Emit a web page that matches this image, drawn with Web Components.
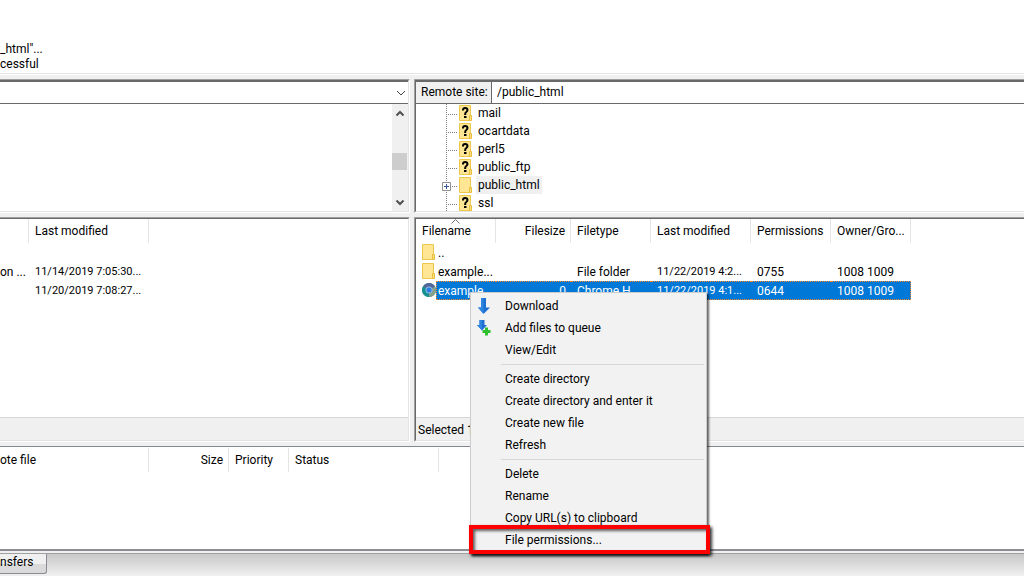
<!DOCTYPE html>
<html lang="en">
<head>
<meta charset="utf-8">
<title>FTP client</title>
<style>
  html, body {
    margin: 0;
    height: 100%;
  }

  body {
    overflow: hidden;
    font: 12px/18px Roboto, "Open Sans", sans-serif;
    color: #000;
    --face: #f0f0f0;
    --shadow: #a0a0a0;
    --dark: #696969;
    --light: #e3e3e3;
    --select: #0078d7;
  }
</style>
</head>
<body>
<ftp-window>
  <message-log slot="log">
    <div>_html"...</div>
    <div>cessful</div>
  </message-log>

  <sunken-pane slot="local-tree">
    <local-site></local-site>
  </sunken-pane>
  <sunken-pane slot="remote-tree">
    <remote-site path="/public_html"></remote-site>
    <remote-tree></remote-tree>
  </sunken-pane>

  <sunken-pane slot="local-files">
    <file-list id="local"></file-list>
    <status-line></status-line>
  </sunken-pane>
  <sunken-pane slot="remote-files">
    <file-list id="remote"></file-list>
    <status-line>Selected 1 file.</status-line>
  </sunken-pane>

  <transfer-queue slot="queue"></transfer-queue>
  <queue-tabs slot="tabs">nsfers</queue-tabs>

  <context-menu slot="menu">
    <menu-item icon="download">Download</menu-item>
    <menu-item icon="queue">Add files to queue</menu-item>
    <menu-item>View/Edit</menu-item>
    <menu-separator></menu-separator>
    <menu-item>Create directory</menu-item>
    <menu-item>Create directory and enter it</menu-item>
    <menu-item>Create new file</menu-item>
    <menu-item>Refresh</menu-item>
    <menu-separator></menu-separator>
    <menu-item>Delete</menu-item>
    <menu-item>Rename</menu-item>
    <menu-item>Copy URL(s) to clipboard</menu-item>
    <menu-item marked>File permissions...</menu-item>
  </context-menu>
</ftp-window>

<script>
const ICONS = {
  folder: `
    <svg width="14" height="16" viewBox="0 0 14 16" aria-hidden="true">
      <path d="M.5.5h11v15H.5z" fill="#ffe694" stroke="#edc64c"/>
      <path d="M10.500 15.500v-5h2v5z" fill="#ffe285" stroke="#e8bd3c"/>
    </svg>`,
  unknown: `
    <svg width="14" height="16" viewBox="0 0 14 16" aria-hidden="true">
      <path d="M.5.5h11v15H.5z" fill="#ffe694" stroke="#edc64c"/>
      <path d="M10.500 15.500v-5h2v5z" fill="#ffe285" stroke="#e8bd3c"/>
      <path d="M4 5.500V5q0-2 2.200-2T8.500 5q0 1.200-1.200 2T6.200 9v1" fill="none" stroke="#000" stroke-width="2"/>
      <path d="M5 11h2.500v2H5z"/>
    </svg>`,
  chrome: `
    <svg width="14" height="14" viewBox="0 0 14 14" aria-hidden="true">
      <circle cx="7" cy="7" r="7" fill="#3f7f8c"/>
      <path d="M7 7L1 3.500A7 7 0 0 1 13 3.500z" fill="#53669a"/>
      <path d="M7 7l6-3.500A7 7 0 0 1 7 14z" fill="#84a08c"/>
      <path d="M7 7v7A7 7 0 0 1 1 3.500z" fill="#149190"/>
      <circle cx="7" cy="7" r="3.500" fill="#8fb8e6"/>
      <circle cx="7" cy="7" r="2.500" fill="#2a7de1"/>
    </svg>`,
  download: `
    <svg width="16" height="16" viewBox="0 0 16 16" aria-hidden="true">
      <path d="M6 0h5v9.500h4L9 15.500H8l-5-6h3z" fill="#1f6fd0"/>
      <path d="M6 0h2.500v15.500L3 9.500h3z" fill="#2f86e0"/>
    </svg>`,
  queue: `
    <svg width="16" height="16" viewBox="0 0 16 16" aria-hidden="true">
      <path d="M4.500 0h5v5H12l-5 5.500L2 5h2.500z" fill="#1f6fd0"/>
      <path d="M4.500 0H7v10.500L2 5h2.500z" fill="#2f86e0"/>
      <path d="M10 7.500h3v2.500h2.500v3H13v2.500h-3V13H7.500v-3H10z" fill="#2fc02f"/>
    </svg>`
};

class FtpWindow extends HTMLElement {
  constructor() {
    super();
    this.attachShadow({ mode: 'open' });
    this.shadowRoot.innerHTML = `
      <style>
        :host {
          position: relative;
          display: grid;
          grid-template-rows: auto auto 1fr auto;
          row-gap: 4px;
          height: 100%;
          overflow: hidden;
          background: var(--face);
        }

        .split {
          display: grid;
          grid-template-columns: 41fr 61fr;
          gap: 4px;
          min-height: 0;
        }

        .trees {
          height: 134px;
        }

        .bottom {
          display: flex;
          flex-direction: column;
        }
      </style>

      <slot name="log"></slot>
      <div class="split trees">
        <slot name="local-tree"></slot>
        <slot name="remote-tree"></slot>
      </div>
      <div class="split">
        <slot name="local-files"></slot>
        <slot name="remote-files"></slot>
      </div>
      <div class="bottom">
        <slot name="queue"></slot>
        <slot name="tabs"></slot>
      </div>
      <slot name="menu"></slot>
    `;
  }
}

class MessageLog extends HTMLElement {
  constructor() {
    super();
    this.attachShadow({ mode: 'open' });
    this.shadowRoot.innerHTML = `
      <style>
        :host {
          display: flex;
          flex-direction: column;
          justify-content: flex-end;
          height: 75px;
          box-sizing: border-box;
          padding-bottom: 2px;
          line-height: 15px;
          white-space: nowrap;
          background: #fff;
          border-bottom: 1px solid #fff;
          box-shadow: inset 0 -1px var(--light);
        }
      </style>
      <slot></slot>
    `;
  }
}

class SunkenPane extends HTMLElement {
  constructor() {
    super();
    this.attachShadow({ mode: 'open' });
    this.shadowRoot.innerHTML = `
      <style>
        :host {
          display: flex;
          min-width: 0;
          min-height: 0;
          border: 1px solid;
          border-color: var(--shadow) #fff #fff var(--shadow);
        }

        .inner {
          flex: 1;
          display: flex;
          flex-direction: column;
          min-width: 0;
          overflow: hidden;
          background: #fff;
          border: 1px solid;
          border-color: var(--dark) var(--light) var(--light) var(--dark);
        }

        :host([slot^="local"]),
        :host([slot^="local"]) .inner {
          border-left: 0;
        }

        :host([slot^="remote"]),
        :host([slot^="remote"]) .inner {
          border-right: 0;
        }
      </style>
      <div class="inner"><slot></slot></div>
    `;
  }
}

class LocalSite extends HTMLElement {
  constructor() {
    super();
    this.attachShadow({ mode: 'open' });
    this.shadowRoot.innerHTML = `
      <style>
        :host {
          flex: 1;
          display: flex;
          flex-direction: column;
          min-height: 0;
        }

        .combo {
          display: grid;
          align-items: center;
          height: 23px;
          box-sizing: border-box;
          border: solid var(--dark);
          border-width: 1px 0;
        }

        .combo > * {
          grid-area: 1 / 1;
        }

        select {
          appearance: none;
          width: 100%;
          height: 21px;
          padding: 0 20px 0 4px;
          border: 0;
          background: transparent;
          font: inherit;
        }

        .combo svg {
          justify-self: end;
          margin-right: 2px;
          pointer-events: none;
        }

        .scroll {
          flex: 1;
          align-self: flex-end;
          display: flex;
          flex-direction: column;
          align-items: center;
          width: 16px;
          background: var(--face);
        }

        button {
          display: flex;
          align-items: center;
          justify-content: center;
          width: 16px;
          height: 18px;
          padding: 0 1px 0 0;
          border: 0;
          background: none;
        }

        .track {
          flex: 1;
          display: grid;
          grid-template-rows: 31fr 17fr 23fr;
          width: 100%;
        }

        .thumb {
          grid-row: 2;
          margin-right: 1px;
          background: #cdcdcd;
        }
      </style>

      <div class="combo">
        <select aria-label="Local site"><option></option></select>
        <svg width="10" height="6" viewBox="0 0 10 6"><path d="M1 1l4 4 4-4" fill="none" stroke="#444"/></svg>
      </div>
      <div class="scroll">
        <button aria-label="Scroll up">
          <svg width="10" height="7" viewBox="0 0 10 7"><path d="M1.500 5.500L5 2l3.500 3.500" fill="none" stroke="#505050" stroke-width="2"/></svg>
        </button>
        <div class="track"><div class="thumb"></div></div>
        <button aria-label="Scroll down">
          <svg width="10" height="7" viewBox="0 0 10 7"><path d="M1.500 1.500L5 5l3.500-3.500" fill="none" stroke="#505050" stroke-width="2"/></svg>
        </button>
      </div>
    `;
  }
}

class RemoteSite extends HTMLElement {
  constructor() {
    super();
    this.attachShadow({ mode: 'open' });
    this.shadowRoot.innerHTML = `
      <style>
        :host {
          display: flex;
          height: 23px;
          flex: none;
          box-sizing: border-box;
          border: solid var(--dark);
          border-width: 1px 0;
        }

        label {
          width: 70px;
          padding-left: 5px;
          line-height: 20px;
          white-space: nowrap;
          background: var(--face);
          border-right: 1px solid var(--dark);
        }

        input {
          flex: 1;
          min-width: 0;
          height: 20px;
          padding: 0 5px;
          border: 0;
          outline: 0;
          background: #fff;
          font: inherit;
          color: inherit;
        }
      </style>
      <label for="path">Remote site:</label>
      <input id="path" type="text">
    `;
  }

  connectedCallback() {
    this.shadowRoot.querySelector('input').value = this.getAttribute('path');
  }
}

class RemoteTree extends HTMLElement {
  constructor() {
    super();
    this.attachShadow({ mode: 'open' });
    const nodes = [
      { name: 'mail' },
      { name: 'ocartdata' },
      { name: 'perl5' },
      { name: 'public_ftp' },
      { name: 'public_html', open: true },
      { name: 'ssl' }
    ];
    this.shadowRoot.innerHTML = `
      <style>
        :host {
          display: block;
          flex: 1;
          min-height: 0;
          overflow: hidden;
        }

        ul {
          margin: 0;
          padding: 0 0 0 25px;
          list-style: none;
        }

        li {
          display: flex;
          align-items: center;
          height: 18px;
        }

        .line {
          flex: none;
        }

        .icon {
          display: flex;
          margin: 0 3px 0 1px;
        }

        .name {
          padding: 0 2px;
        }

        .current {
          background: var(--face);
        }
      </style>
      <ul>
        ${nodes.map(node => `
          <li>
            <svg class="line" width="17" height="18" viewBox="0 0 17 18" aria-hidden="true">
              <path d="M5.500 0v18M7 10.500h10" fill="none" stroke="#808080" stroke-dasharray="1 1"/>
              ${node.open ? `
                <path d="M1.500 6.500h8v8h-8z" fill="#fff" stroke="#8f8f8f"/>
                <path d="M3 10.500h5M5.500 8v5" stroke="#3a5a9c"/>` : ''}
            </svg>
            <span class="icon">${node.open ? ICONS.folder : ICONS.unknown}</span>
            <span class="name ${node.open ? 'current' : ''}">${node.name}</span>
          </li>`).join('')}
      </ul>
    `;
  }
}

const TABLE_STYLE = `
  table {
    border-collapse: separate;
    border-spacing: 0;
    table-layout: fixed;
    width: 0;
  }

  th, td {
    box-sizing: border-box;
    padding: 0 5px 0 6px;
    text-align: left;
    font-weight: normal;
    white-space: nowrap;
  }

  th {
    height: 24px;
    border-right: 1px solid #e5e5e5;
  }

  .right {
    text-align: right;
  }
`;

class FileList extends HTMLElement {
  constructor() {
    super();
    this.attachShadow({ mode: 'open' });
  }

  set data({ columns, rows }) {
    const cell = (text, i, icon) => {
      if (columns[i].type === 'name') {
        return `<td class="name"><div><span class="icon">${ICONS[icon]}</span><span class="text">${text}</span></div></td>`;
      }
      return `<td class="${columns[i].type || ''}">${text}</td>`;
    };

    this.shadowRoot.innerHTML = `
      <style>
        :host {
          display: block;
          flex: 1;
          min-height: 0;
          overflow: hidden;
        }

        ${TABLE_STYLE}

        td {
          height: 19px;
          padding-top: 1px;
          line-height: 16px;
          border: solid transparent;
          border-width: 1px 0;
        }

        td.date {
          font-size: 11px;
        }

        td.flush {
          padding-left: 0;
          padding-right: 0;
        }

        th.name {
          background: url("data:image/svg+xml,%3Csvg xmlns='http://www.w3.org/2000/svg' width='9' height='5'%3E%3Cpath d='M.5 4.500l4-4 4 4' fill='none' stroke='%23707070'/%3E%3C/svg%3E") no-repeat center top;
        }

        td.name {
          padding: 0;
          border: 0;
        }

        .name div {
          display: flex;
        }

        .icon {
          flex: none;
          display: flex;
          align-items: center;
          justify-content: center;
          width: 20px;
          height: 18px;
          box-sizing: border-box;
          padding-left: 5px;
        }

        .text {
          flex: 1;
          padding: 1px 0 0 1px;
          border: 1px solid transparent;
        }

        .selected td:not(.name), .selected .text {
          color: #fff;
          background: var(--select);
          border-color: #ff8728;
          border-style: dotted;
        }

        .selected .text {
          border-right: 0;
        }

        .selected td:last-child {
          border-right-width: 1px;
        }
      </style>
      <table>
        <colgroup>${columns.map(c => `<col style="width: ${c.width}px">`).join('')}</colgroup>
        <thead>
          <tr>${columns.map(c => `<th class="${c.type || ''}">${c.title}</th>`).join('')}</tr>
        </thead>
        <tbody>
          ${rows.map(row => `
            <tr class="${row.selected ? 'selected' : ''}">
              ${row.cells.map((text, i) => cell(text, i, row.icon)).join('')}
            </tr>`).join('')}
        </tbody>
      </table>
    `;
  }
}

class StatusLine extends HTMLElement {
  constructor() {
    super();
    this.attachShadow({ mode: 'open' });
    this.shadowRoot.innerHTML = `
      <style>
        :host {
          display: block;
          flex: none;
          height: 23px;
          box-sizing: border-box;
          padding: 3px 2px 0;
          white-space: nowrap;
          background: var(--face);
          border-top: 1px solid #d7d7d7;
        }
      </style>
      <slot></slot>
    `;
  }
}

class TransferQueue extends HTMLElement {
  constructor() {
    super();
    this.attachShadow({ mode: 'open' });
    this.shadowRoot.innerHTML = `
      <style>
        :host {
          display: block;
          height: 105px;
          box-sizing: border-box;
          padding-top: 1px;
          background: #fff;
          border-top: 1px solid #828790;
          border-bottom: 2px solid #8c8c94;
        }

        ${TABLE_STYLE}

        th:first-child {
          padding-left: 0;
        }
      </style>
      <table>
        <colgroup>
          <col style="width: 149px"><col style="width: 80px"><col style="width: 60px"><col style="width: 150px">
        </colgroup>
        <thead>
          <tr><th>ote file</th><th class="right">Size</th><th>Priority</th><th>Status</th></tr>
        </thead>
      </table>
    `;
  }
}

class QueueTabs extends HTMLElement {
  constructor() {
    super();
    this.attachShadow({ mode: 'open' });
    this.shadowRoot.innerHTML = `
      <style>
        :host {
          display: flex;
          align-items: flex-start;
          height: 22px;
          border-top: 1px solid #a0a0a0;
          margin-top: 2px;
          background: linear-gradient(#c8c8c8, #f0f0f0);
        }

        button {
          width: 47px;
          height: 20px;
          padding: 0 0 2px;
          border: solid #8c8c94;
          border-width: 0 1px 1px 0;
          border-radius: 0 0 3px 0;
          background: linear-gradient(#f0f0f0 50%, #dadada 50%);
          font: inherit;
          line-height: 17px;
          text-align: left;
          color: inherit;
        }
      </style>
      <button><slot></slot></button>
    `;
  }
}

class ContextMenu extends HTMLElement {
  constructor() {
    super();
    this.attachShadow({ mode: 'open' });
    this.shadowRoot.innerHTML = `
      <style>
        :host {
          position: absolute;
          left: 470px;
          top: 292px;
          width: 237px;
          box-sizing: border-box;
          padding: 2px;
          background: #f2f2f2;
          border: 1px solid #ccc;
          box-shadow: 2px 2px 2px rgba(0, 0, 0, 0.6);
        }
      </style>
      <slot></slot>
    `;
  }
}

class MenuItem extends HTMLElement {
  constructor() {
    super();
    this.attachShadow({ mode: 'open' });
    this.shadowRoot.innerHTML = `
      <style>
        :host {
          display: block;
          position: relative;
        }

        button {
          display: grid;
          grid-template-columns: 28px 1fr;
          column-gap: 4px;
          align-items: center;
          width: 100%;
          height: 22px;
          padding: 0;
          border: 0;
          background: none;
          font: inherit;
          color: inherit;
          text-align: left;
          white-space: nowrap;
        }

        .icon {
          display: flex;
          padding-left: 2px;
        }

        :host([marked])::after {
          content: "";
          position: absolute;
          inset: -4px -6px -3px -4px;
          border: 4px solid #f00;
          box-shadow: 2px 2px 3px rgba(0, 0, 0, 0.8), inset 2px 2px 3px rgba(0, 0, 0, 0.6);
        }
      </style>
      <button><span class="icon"></span><slot></slot></button>
    `;
  }

  connectedCallback() {
    this.shadowRoot.querySelector('.icon').innerHTML = ICONS[this.getAttribute('icon')] || '';
  }
}

class MenuSeparator extends HTMLElement {
  constructor() {
    super();
    this.attachShadow({ mode: 'open' });
    this.shadowRoot.innerHTML = `
      <style>
        :host {
          display: block;
          height: 1px;
          margin: 3px 0 3px 28px;
          background: #d7d7d7;
        }
      </style>
    `;
  }
}

customElements.define('ftp-window', FtpWindow);
customElements.define('message-log', MessageLog);
customElements.define('sunken-pane', SunkenPane);
customElements.define('local-site', LocalSite);
customElements.define('remote-site', RemoteSite);
customElements.define('remote-tree', RemoteTree);
customElements.define('file-list', FileList);
customElements.define('status-line', StatusLine);
customElements.define('transfer-queue', TransferQueue);
customElements.define('queue-tabs', QueueTabs);
customElements.define('context-menu', ContextMenu);
customElements.define('menu-item', MenuItem);
customElements.define('menu-separator', MenuSeparator);

document.getElementById('local').data = {
  columns: [
    { title: '', width: 29, type: 'flush' },
    { title: 'Last modified', width: 120, type: 'date' }
  ],
  rows: [
    { cells: ['', ''] },
    { cells: ['on ...', '11/14/2019 7:05:30...'] },
    { cells: ['', '11/20/2019 7:08:27...'] }
  ]
};

document.getElementById('remote').data = {
  columns: [
    { title: 'Filename', width: 80, type: 'name' },
    { title: 'Filesize', width: 75, type: 'right' },
    { title: 'Filetype', width: 80 },
    { title: 'Last modified', width: 100, type: 'date' },
    { title: 'Permissions', width: 80 },
    { title: 'Owner/Gro...', width: 80 }
  ],
  rows: [
    { icon: 'folder', cells: ['..', '', '', '', '', ''] },
    { icon: 'folder', cells: ['example...', '', 'File folder', '11/22/2019 4:2...', '0755', '1008 1009'] },
    { icon: 'chrome', selected: true, cells: ['example...', '0', 'Chrome H...', '11/22/2019 4:1...', '0644', '1008 1009'] }
  ]
};
</script>
</body>
</html>
